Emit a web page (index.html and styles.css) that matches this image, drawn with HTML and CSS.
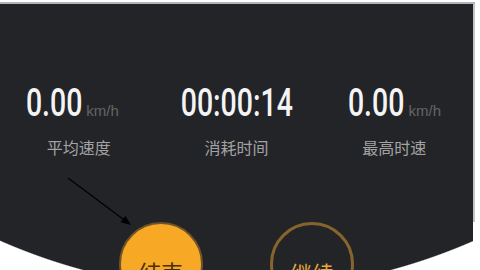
FILE: index.html
```html
<!DOCTYPE html>
<html>
	<head>
		<meta charset="utf-8">
		<title>骑行</title>
		<link rel="stylesheet" href="styles.css">
	</head>
	<body>
		<div class="panel">
			<div class="stats">
				<div class="item first">
					<div class="val speed"><span class="num">0.00</span><span class="unit">km/h</span></div>
					<div class="label">平均速度</div>
				</div>
				<div class="item">
					<div class="val"><span class="num">00:00:14</span></div>
					<div class="label">消耗时间</div>
				</div>
				<div class="item">
					<div class="val speed"><span class="num">0.00</span><span class="unit">km/h</span></div>
					<div class="label">最高时速</div>
				</div>
			</div>
			<div class="btns">
				<div class="btn end">结束</div>
				<div class="btn go">继续</div>
			</div>
			<svg class="arrow" width="160" height="240" viewBox="0 0 160 240">
				<line x1="68" y1="178" x2="125" y2="220.5" stroke="#000" stroke-width="1.3"/>
				<polygon points="131,225 120.6,222.2 125.4,215.8" fill="#000"/>
			</svg>
		</div>
	</body>
</html>
```

FILE: styles.css
```css
body{
	margin: 0;
	height: 270px;
	overflow: hidden;
	background: #fff;
}
.panel{
	position: relative;
	width: 475px;
	height: 268px;
	margin-top: 2px;
	border-top: 2px solid #b4b4b4;
	box-sizing: border-box;
	background:
		linear-gradient(#c4c4c4, #c4c4c4) right top / 2px 218px no-repeat,
		radial-gradient(circle 590px at 237px -303px, #232428 99.8%, rgba(35,36,40,0) 100%) left top / 473px 100% no-repeat;
	display: flex;
	flex-direction: column;
}
.stats{
	display: flex;
	width: 473px;
	margin-top: 80px;
}
.item{
	flex: 1;
	display: flex;
	flex-direction: column;
	align-items: center;
}
.val{
	display: flex;
	align-items: baseline;
	color: #f4f4f4;
}
.first .val{
	margin-right: 14px;
}
.num{
	display: inline-block;
	font-family: Roboto, "Liberation Sans", sans-serif;
	font-weight: 500;
	font-size: 39px;
	line-height: 1;
	transform: scaleX(0.73);
}
.speed .num{
	margin-left: -20px;
	transform-origin: right center;
}
.unit{
	margin-left: 4px;
	font-family: "Liberation Sans", sans-serif;
	font-size: 15px;
	color: #646464;
}
.label{
	margin-top: 16px;
	font-family: "Noto Sans CJK SC", sans-serif;
	font-size: 16px;
	line-height: 1;
	color: #a3a3a3;
}
.btns{
	display: flex;
	justify-content: center;
	gap: 67px;
	width: 473px;
	margin-top: 67px;
}
.btn{
	width: 84px;
	height: 84px;
	flex: none;
	border-radius: 50%;
	box-sizing: border-box;
	display: flex;
	justify-content: center;
	padding-top: 36px;
	font-family: "Noto Sans CJK SC", sans-serif;
	font-size: 22px;
	line-height: 1;
}
.end{
	background: #f7a824;
	border: 2px solid #6e5328;
	color: #4a2e0e;
}
.go{
	background: #232428;
	border: 3px solid #87642d;
	color: #e5a83a;
}
.arrow{
	position: absolute;
	left: 0;
	top: -4px;
}
```
